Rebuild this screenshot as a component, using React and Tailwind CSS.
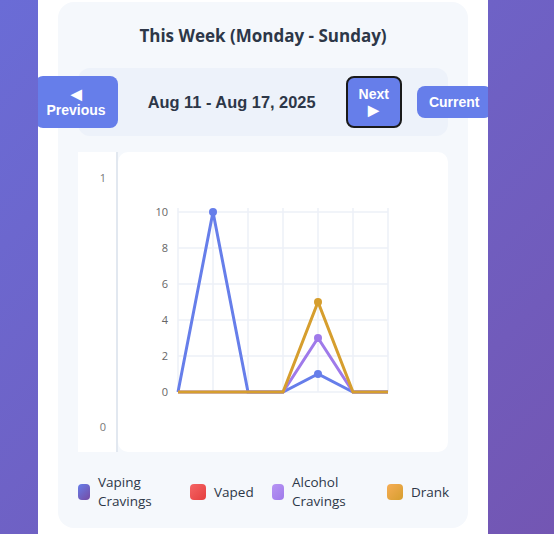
import React from 'react'

const xs = [178, 213, 248, 283, 318, 353, 388].map((x) => x - 118)
const y0 = 240
const unit = 18

// Vaped stays flat at zero and is hidden behind the others in the reference
const series = [
  { name: 'Vaping Cravings', color: '#667eea', data: [0, 10, 0, 0, 1, 0, 0] },
  { name: 'Alcohol Cravings', color: '#9f7aea', data: [0, 0, 0, 0, 3, 0, 0] },
  { name: 'Drank', color: '#d69e2e', data: [0, 0, 0, 0, 5, 0, 0] }
]

const legend = [
  { label: 'Vaping Cravings', swatch: 'w-3 bg-[linear-gradient(135deg,#667eea,#764ba2)]' },
  { label: 'Vaped', swatch: 'w-4 bg-[linear-gradient(135deg,#f56565,#e53e3e)]' },
  { label: 'Alcohol Cravings', swatch: 'w-3 bg-[linear-gradient(135deg,#b794f4,#9f7aea)]' },
  { label: 'Drank', swatch: 'w-4 bg-[linear-gradient(135deg,#f6ad55,#d69e2e)]' }
]

function Chart() {
  const ticks = [0, 2, 4, 6, 8, 10]
  return (
    <svg width="330" height="300" className="block">
      {ticks.map((t) => (
        <line key={'h' + t} x1={xs[0]} x2={xs[6]} y1={y0 - t * unit} y2={y0 - t * unit} stroke="#edf0f7" strokeWidth="1.5" />
      ))}
      {xs.map((x) => (
        <line key={'v' + x} x1={x} x2={x} y1={y0 - 10 * unit - 4} y2={y0} stroke="#edf0f7" strokeWidth="1.5" />
      ))}
      {ticks.map((t) => (
        <text
          key={'l' + t}
          x={50}
          y={y0 - t * unit + 4}
          textAnchor="end"
          fontSize="11"
          fill="#666666"
          fontFamily="'Open Sans', sans-serif"
        >
          {t}
        </text>
      ))}
      {series.map((s) => (
        <g key={s.name}>
          <polyline
            points={s.data.map((v, i) => `${xs[i]},${y0 - v * unit}`).join(' ')}
            fill="none"
            stroke={s.color}
            strokeWidth="3"
          />
          {s.data.map((v, i) =>
            v > 0 ? <circle key={i} cx={xs[i]} cy={y0 - v * unit} r="4" fill={s.color} /> : null
          )}
        </g>
      ))}
    </svg>
  )
}

export default function App() {
  return (
    <div className="h-[534px] overflow-hidden bg-[linear-gradient(135deg,#6a6cd6,#7356b3)] pl-[38px] font-['Open_Sans',sans-serif]">
      <div className="w-[450px] h-full bg-white overflow-hidden px-5 pt-[2px]">
        <div className="bg-[#f5f8fc] rounded-2xl px-5 pt-5 pb-[17px]">
          <h2 className="text-center text-[17px] leading-[27px] font-bold text-[#2d3748] mb-[19px]">
            This Week (Monday - Sunday)
          </h2>

          {/* Week nav */}
          <div className="bg-[#edf2fa] rounded-xl py-2 flex items-center justify-center gap-[15px] mb-4 font-['Liberation_Sans',Arial,sans-serif]">
            <button className="shrink-0 bg-[#667eea] text-white font-bold text-[14px] leading-4 px-3 py-[10px] rounded-lg">
              ◀<br />Previous
            </button>
            <div className="shrink-0 px-[15px] text-[16.4px] font-bold text-[#2d3748] whitespace-nowrap">
              Aug 11 - Aug 17, 2025
            </div>
            <button className="shrink-0 bg-[#667eea] text-white font-bold text-[14px] leading-4 px-[11px] py-[8px] rounded-lg border-2 border-[#1a1a1a]">
              Next<br />▶
            </button>
            <button className="shrink-0 bg-[#667eea] text-white font-bold text-[14px] leading-4 px-3 py-2 rounded-lg">
              Current
            </button>
          </div>

          {/* Chart */}
          <div className="flex h-[300px]">
            <div className="w-[38px] bg-white flex flex-col justify-between items-end pr-[10px] pt-[18px] pb-[17px] text-[11px] leading-4 text-[#777]">
              <span>1</span>
              <span>0</span>
            </div>
            <div className="w-[2px] bg-[#e2e8f0]" />
            <div className="flex-1 bg-white rounded-[10px] overflow-hidden">
              <Chart />
            </div>
          </div>

          {/* Legend */}
          <div className="mt-[21px] grid grid-cols-[112px_82px_115px_61px] items-center text-[13.5px] leading-[19px] text-[#2d3748]">
            {legend.map((l) => (
              <div key={l.label} className="flex items-center gap-2">
                <div className={`h-4 shrink-0 rounded ${l.swatch}`} />
                <span>{l.label}</span>
              </div>
            ))}
          </div>
        </div>
      </div>
    </div>
  )
}
